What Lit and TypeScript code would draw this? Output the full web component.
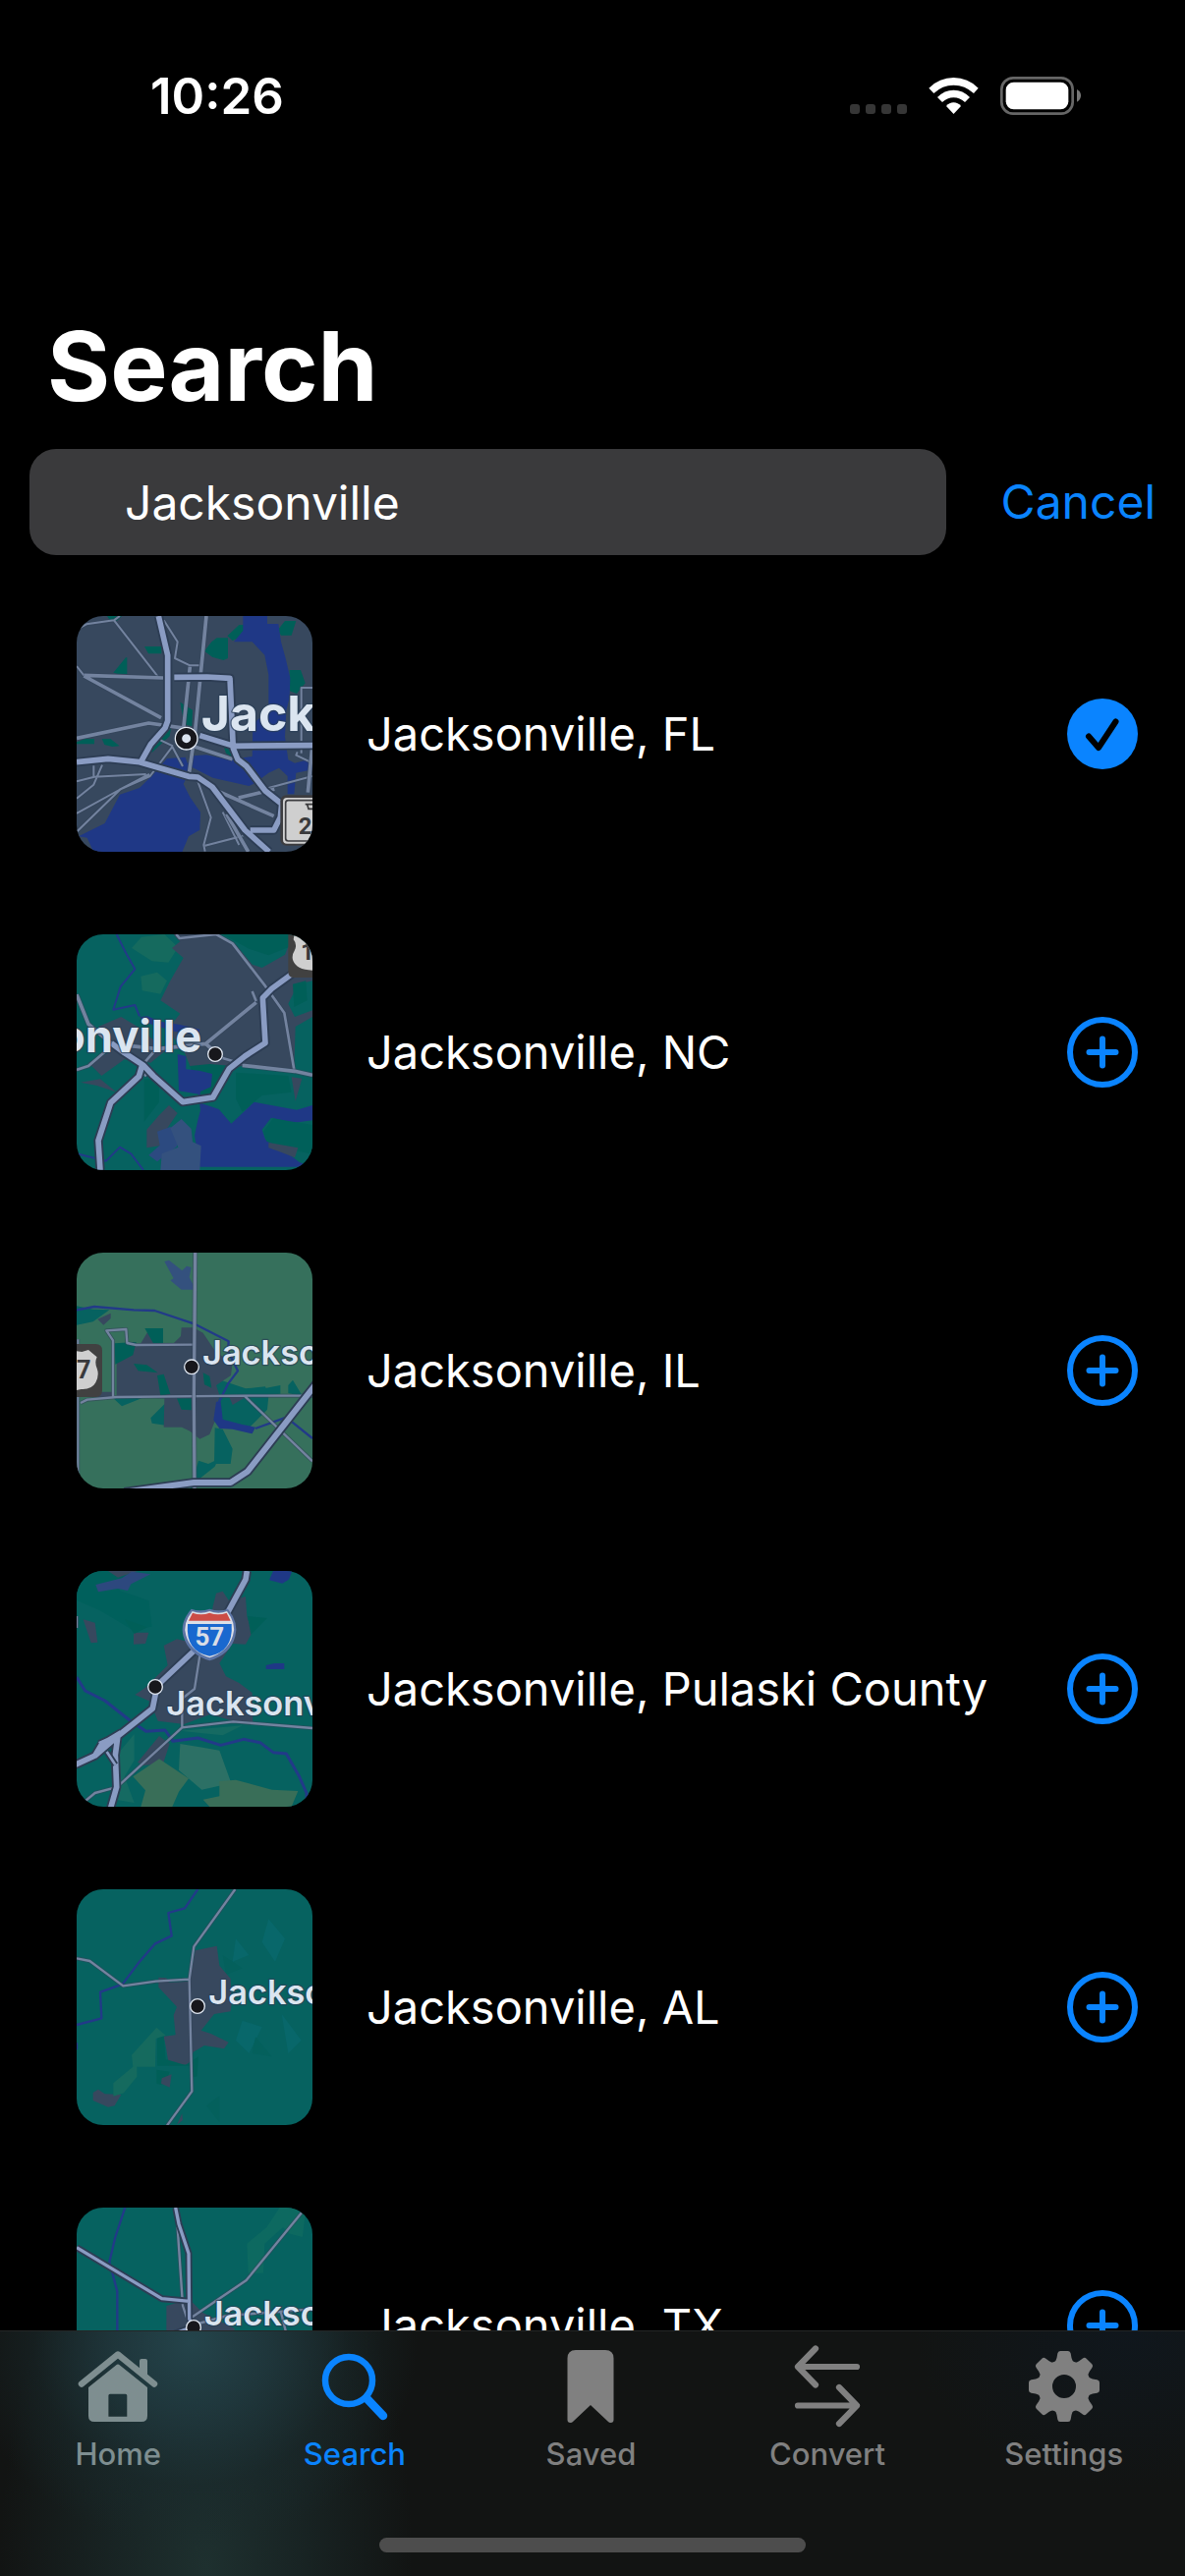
import { LitElement, html, svg, css, nothing, TemplateResult, SVGTemplateResult } from "lit";
import { customElement, property, state } from "lit/decorators.js";
import { classMap } from "lit/directives/class-map.js";

const BLUE = "#0a84ff";

/* ---------- map thumbnails (720-unit square canvases) ---------- */

const area = (fill: string, d: string) => svg`<path fill=${fill} d=${d} />`;

const river = (d: string, w = 6) =>
  svg`<path fill="none" stroke="#223a88" stroke-width=${w} stroke-linejoin="round" d=${d} />`;

const minor = (d: string, w = 8) =>
  svg`<path fill="none" stroke="#33445a" stroke-opacity=".6" stroke-width=${w + 5} stroke-linejoin="round" d=${d} />
      <path fill="none" stroke="#73839f" stroke-width=${w} stroke-linejoin="round" d=${d} />`;

const major = (d: string, w = 17) =>
  svg`<path fill="none" stroke="#2d3d54" stroke-width=${w + 11} stroke-linejoin="round" d=${d} />
      <path fill="none" stroke="#8a9cc3" stroke-width=${w} stroke-linejoin="round" d=${d} />`;

const place = (name: string, x: number, y: number, size: number, anchor = "start") =>
  svg`<text class=${size > 120 ? "place large" : "place"} x=${x} y=${y} font-size=${size} text-anchor=${anchor}>${name}</text>`;

const dot = (x: number, y: number) =>
  svg`<circle cx=${x} cy=${y} r="22" fill="#17171c" stroke="#dfe6f0" stroke-width="4" />`;

const CITY = "#37485e";
const TEAL = "#066260";
const PARK = "#005f58";
const WATER = "#1f3886";
const FIELD = "#36705c";
const LAKE = "#34517e";

interface MapArt {
  box: string;
  art: SVGTemplateResult;
}

const maps: Record<string, MapArt> = {
  fl: {
    box: "54 51 720 720",
    art: svg`
      ${area(CITY, "M54 51h720v720H54z")}
      ${area(PARK, "M147 51h45l-14 14h-22zM166 224l38-46h4v50l-30-1zM261 144h52v22h-40zM54 436l26-10h28v16H54zM131 426h26l28 22-22 2-24-6zM444 158l22-28 16-12h34v62l-14 6-34-10zM514 112l36-34h14v34l-34 14zM668 94l22-28h34l-14 44h-32zM704 216h34l14 40-26 32-22-8zM370 314l38 24-2 50-24-6zM282 462l60-68-4 24-54 50zM500 440l26 16 6 26-22-12z")}
      ${area(WATER, "M562 51H636V75H670L678 130 692 180 706 240 704 300 694 340 690 420 700 490 720 500 774 486V520L724 530 718 595H698V540L672 515 640 530 600 560 580 570 470 545 390 505 410 478 450 475 520 490 590 480 592 380 640 340V230L628 170 590 130H534L562 96Z")}
      ${area(WATER, "M330 486l56-4 14 42-20 40 20 40 32 46-2 54-34 20-20 48H106l-20-44-26-4 80-40 46-88 60-20 40-40z")}
      ${minor("M54 92l30-16 84-12 18-13M168 64l134 172M54 204l22 28M54 556l54-14 158-8M54 608l52-42 26-60M106 508v34M54 654l130-72 92-48M54 710l134-130 90-40 68-90 32 60M310 430l38 18M320 64l42 66-8 50 46 22h28M446 770l-4-20 22-84-40-110M446 752l116-30M640 576l134-36M728 466l-4 10 50 24M774 270h-34v200M500 650l50 100", 6)}
      ${minor("M450 51l-34 350-20 140M400 206l-20 190M76 232l242 8M76 234l236 128M54 424l220-46 112 16M414 450l116 38M490 588l166 74M548 606l110-26M774 440l-14 150M512 656l66 115", 11)}
      ${major("M304 51l28 120v200l-8 22-44 50-28 50M54 497l96-10 96 10 150 44 28 2 44 30 100 132 74 66M352 238l100-1 70 4 10 214 14 34 26 20 58 76 50 40-4 40-20 40h-72M430 416l104 32 240-2")}
      <rect x="676" y="598" width="152" height="154" rx="18" fill="#3d3d40" />
      <rect x="684" y="606" width="150" height="140" rx="12" fill="#cfcfcf" />
      <rect x="692" y="614" width="150" height="124" rx="8" fill="none" stroke="#3d3d40" stroke-width="5" />
      <path d="M752 626h40M758 626l4 14h14" fill="none" stroke="#3a3a3c" stroke-width="5" />
      <text class="shield" x="731" y="716" font-size="72">22</text>
      <circle cx="389" cy="425" r="24" fill="#dbe3ef" />
      <circle cx="389" cy="425" r="23" fill="none" stroke="#17171c" stroke-width="19" />
      <circle cx="389" cy="425" r="34" fill="none" stroke="#e6ebf3" stroke-width="4" />
      ${place("Jacksonville", 434, 403, 150)}
    `,
  },
  nc: {
    box: "54 48 720 720",
    art: svg`
      ${area(TEAL, "M54 48h720v720H54z")}
      ${area("#156a5e", "M222 90l30-34 70-8 42 40-30 46-50-4zM250 176l50-12 30 26-20 40-56-10z")}
      ${area(CITY, "M345 90L370 70 350 48H484L540 80 590 140 620 150 690 110 710 60 774 110V190L730 200 700 260 720 300 774 280V300L722 330 718 460 560 450 530 455 480 540 400 450 380 400 330 340 370 290 310 250 340 190 380 120ZM120 330L190 300 240 330 300 380 330 400 280 440 200 430 130 480 90 440 150 410 160 380ZM66 500l60-10 50 40-60-20zM548 506l20 40 2 34-20-30zM306 600l30-30 26 24-34 50-20 50-40 6v-56zM710 484l32 4-20 70z")}
      ${area(PARK, "M500 48h200v40l-60 24-60-20zM714 200l40-10 4 60-40 20zM540 470l160 10 10 50-90 10-60 50-20-40zM260 490h46v70l-46 60z")}
      ${area(PARK, "M400 450l60-6 70 6-40 70-60 30z")}
      ${area(WATER, "M246 300l24-2 40 16 60 10 60 14-4 16-60-6-100-30zM362 414l26 6v40l40 4 40 10-4 40-32 14-4 34 60 20 38 44 70-66 40 8 90 16 48-14v46l-60 8-66-16-28 36 10 30 44 24 60 46 42 14H430l-16-96 10-46 8-30-6-50-60-10z")}
      ${area("#00605a", "M624 650l30-40 60 10 60 10v90l-90-20-50-20z")}
      ${area(CITY, "M640 684l90 16-10 30-50-20-30-10z")}
      ${area("#2c4a80", "M300 650l40-14 32 20-12 40-60 46-26-20 34-30z")}
      ${area(LAKE, "M340 640l34-28 30 30 4 40 26 12-4 74H310l4-50 50-20z")}
      ${river("M176 48l30 60 26 46-44 54-22 70 66-14 14 34M54 718l90 22 42-42 34 20 38 50")}
      ${minor("M358 48l10 12 112-12 50 28 100 130 58 82 30 174M54 462l36-12 70-60M590 222l12 30M500 426l60 18 M264 436l30-34", 8)}
      ${minor("M54 232l36 90 70 60 140 16 148-16 154-126M448 382l50 44M560 448l160 18 54 12M260 480l20-20", 11)}
      ${major("M126 768l-6-90 38-116 86-80 10-34M160 380l40 30 58 38 30 32 90 80 92-14 50-88 48-38 62-40-8-138 28-28 74-54")}
      <path d="M700 48h80v132h-62q-18 0-18-18z" fill="#414141" />
      <path d="M718 52h62v106q-56 0-66-32-4-14 6-30 8-18-4-32z" fill="#cfcfcf" />
      <text class="shield" x="738" y="126" font-size="72">17</text>
      ${dot(477, 414)}
      ${place("Jacksonville", 436, 407, 136, "end")}
    `,
  },
  il: {
    box: "54 45 720 720",
    art: svg`
      ${area(FIELD, "M54 45h720v720H54z")}
      ${area(LAKE, "M322 72l14-4 40 32 14-14 14 4-6 30 12 24v14h-36l-34-28 10-6z")}
      ${area(TEAL, "M54 208l50 10 50 2-50 36-50 10zM162 486l90 4-60 24zM280 550l60-60 40 20-30 66-66-10zM476 580l24 4 30 60-6 46h-50zM400 770l26-90 30 10 30-14-10 22-50 40zM480 430l90 30 60-6 10 30-4 40-60 60-100-20zM626 460l50-10v26l-50 4zM700 450l14-16 30 50-44-10z")}
      ${area(CITY, "M118 248l40-18v16l-22 20zM176 340L250 322 275 280 300 290 318 322 350 322 372 300 374 274 410 274 440 290 460 320 480 350 530 380 525 420 480 450 490 480 480 550 460 600 430 614 400 590 375 578 320 578 322 490 176 486ZM110 470h52v16H110zM520 486h50l-40 24z")}
      ${area(PARK, "M262 276h56v46h-30zM228 384l40 4 34 24-60-6zM300 420l20-4 20 60-30 6zM440 412l20 10 6 36-22-10zM170 322l66-4-10 40-54 28zM360 490h44v36l-30-2z")}
      ${river("M54 220l54-10 120 10 64 2 120 40 106 54-2 30 30 60-30 40-30 60M600 582l94-34 80 64", 7)}
      ${area(WATER, "M480 500h14l6 54 60 16 40 8-10 20-60-14-40-2-18-26z")}
      ${minor("M412 326l-176 1-28-6-3-42-60 4 20 30v172M66 504l20-10 90-8 392-4h206M568 484l206 198", 7)}
      ${minor("M416 45l-4 440 2 280", 10)}
      ${minor("M58 310v455", 6)}
      ${major("M200 776l212-29h112l52-34 210-268", 18)}
      <path d="M40 324h72q20 0 20 20v122q0 20-20 20H40z" fill="#414141" />
      <path d="M40 344l30 4 20-6 26 22q-8 16 0 34 8 22-4 44-12 22-44 20l-28 6z" fill="#cfcfcf" />
      <text class="shield" x="98" y="430" font-size="76" text-anchor="end">67</text>
      ${dot(405, 394)}
      ${place("Jacksonville", 438, 387, 103)}
    `,
  },
  pulaski: {
    box: "54 42 720 720",
    art: svg`
      ${area(TEAL, "M54 42h720v720H54z")}
      ${area("#00605c", "M54 42h160l-30 60 90 30 10 80-60 10-100-60-70-30z")}
      ${area("#156a62", "M370 530l190-16-60 30-60-6zM180 600l50-60v80l-30 50 30 80-60-10z")}
      ${area(CITY, "M480 110l20-6 20 30 50-14 4 60 16 50-20 36-40-2-40 60 20 40 40 20 40 30 2 90-60-4-70-20-80 30-80-10-24-60-46-20 30-20 70-70-12-60 40-20 90 20 20-120zM74 190l36 10 8 60-20 2zM228 230h46l-10 34-36 2zM150 42h90l-60 20zM240 626l66-80 32 24-20 60-60 6z")}
      ${area("#2d487e", "M112 84l80-20 30-20 58 8-60 30-10 20-30-6-60 10z")}
      ${area(PARK, "M576 180l60 6-50 50zM200 190l70 24-40 20z")}
      ${area(WATER, "M654 42h58l-10 26-20 12-40-10zM632 330l26-6h30v18h-56z")}
      ${area("#2c7065", "M370 570l60 10 60 10 36 100-90 20-70-60z")}
      ${area("#396e58", "M226 670l80-54 90 60-30 40-20 46H250l14-50zM440 740l50-10v-46l50-4 110 30 80 4-20 48H460z")}
      ${river("M54 366l26 42 60 30 76 60 50 34 58-4 24 34 76-10 70 22 70-18 50 10 40 30 40 4 40 70 22 50v50", 9)}
      ${minor("M430 300l-16 102-38 30v88M376 520l156-18 242 20M376 520l-190 174M76 748l34-28 60-16M54 180v36", 7)}
      ${major("M574 42l-4 26-60 110-100 110-110 104-14 70-106 84-70 60-60 28M180 544l-8 60 4 98-20 70M124 572l56-26M110 606l20-34 60-36", 17)}
      ${major("M146 594l26 40", 8)}
      <path d="M404 158q26 10 56 0 30 10 56 0 34 42 22 84-14 54-78 74-64-20-80-74-12-42 24-84z" fill="#5c74a4" />
      <path d="M407 165q26 10 53 0 27 10 53 0 30 38 18 74-14 48-71 68-58-20-72-68-12-36 19-74z" fill="#dcdee6" />
      <path d="M393 204h134q6 84-67 98-74-14-67-98z" fill="#1968cf" />
      <path d="M408 170q26 10 52 0 26 10 52 0l12 24H396z" fill="#cc4c46" />
      <text class="route" x="460" y="270" font-size="78" text-anchor="middle">57</text>
      ${dot(294, 396)}
      ${place("Jacksonville", 328, 482, 103)}
    `,
  },
  al: {
    box: "54 39 720 720",
    art: svg`
      ${area(TEAL, "M54 39h720v720H54z")}
      ${area("#08676a", "M640 130l50 60-30 70-40-60zM540 190l40 50-50 20zM560 440l60 20-40 80-40-40zM680 420l60 80-40 40z")}
      ${area("#04605c", "M500 240l60 40-50 20zM600 490l50 60-60-10zM450 700l40-30v80z")}
      ${area(CITY, "M416 226l66-14 8 60 34 40 4 70-4 30-50 8-40 50 30 10 54 26-14 20-60-10-34 20-14 38-60 4-10-60-6-30 36-4-6-60 10-26-56-60v-30l24 2 8 14 62-4 8-40zM104 660l16-10 20 14 50 2-20 34-20 4-46-20zM360 758l16-34 2 20z")}
      ${area(PARK, "M300 488h20l6 70 60 18 40-26-4 60-20 4-4-36-98 0zM298 590l40 6-6 20-20 20-14-4z")}
      ${area(CITY, "M314 616l30-12-6 40-26-12z")}
      ${area("#156a5e", "M222 545l76-84 28 24-30 10-2 86h-56v30l-40 50-32 10v-40l60-50z")}
      ${river("M424 39l-40 58-50 14 10 70-50 24-52 60-48 64-68 24 4 80-76 20M54 508v20", 7)}
      ${minor("M54 250l40 8 102 76 100-14 102-6M538 39L412 214l-14 100 8 342-76 104", 7)}
      ${dot(423, 396)}
      ${place("Jacksonville", 457, 391, 103)}
    `,
  },
  tx: {
    box: "0 0 720 720",
    art: svg`
      ${area(TEAL, "M0 0h720v720H0z")}
      ${area("#0d6960", "M520 110l60-50 40-60h80l-10 90-40-10-20-20-56 50-4 90h-46z")}
      ${area(CITY, "M274 300l70-20 40 40 100 50-30 40-180 20z")}
      ${river("M148 0l-30 90-18 76 24 90v180", 7)}
      ${minor("M688 14L518 222 350 336M308 60l16 240 20 60M350 360l110-30 260-20M624 320l20 80", 7)}
      ${major("M302 0l10 50 30 90 2 200 14 30M0 122l260 156 84 8", 10)}
      ${major("M290 390l70-26", 14)}
      ${dot(357, 366)}
      ${place("Jacksonville", 389, 361, 103)}
    `,
  },
};

@customElement("map-thumb")
class MapThumb extends LitElement {
  @property() map = "fl";

  static styles = css`
    :host {
      display: block;
      flex: none;
      width: 240px;
      height: 240px;
      border-radius: 27px;
      overflow: hidden;
    }
    .canvas {
      display: block;
      width: 100%;
      height: 100%;
    }
    .place {
      font-family: Inter, "Liberation Sans", sans-serif;
      font-weight: 600;
      fill: #dbe5f0;
      stroke: #2b4058;
      stroke-opacity: 0.7;
      stroke-width: 8px;
      stroke-linejoin: round;
      paint-order: stroke;
    }
    .large {
      font-weight: 700;
    }
    .shield,
    .route {
      font-family: "Roboto", "Liberation Sans", sans-serif;
      font-weight: 700;
      fill: #3a3a3c;
    }
    .route {
      fill: #d9dde6;
    }
  `;

  render() {
    const m = maps[this.map];
    return html`<svg class="canvas" viewBox=${m.box} aria-hidden="true">${m.art}</svg>`;
  }
}

/* ---------- icons ---------- */

const plusIcon = html`<svg viewBox="0 0 72 72" width="72" height="72" aria-hidden="true">
  <circle cx="36" cy="36" r="33" fill="none" stroke=${BLUE} stroke-width="6" />
  <path d="M36 22.500V49.500M22.500 36H49.500" stroke=${BLUE} stroke-width="6" stroke-linecap="round" />
</svg>`;

const checkIcon = html`<svg viewBox="0 0 72 72" width="72" height="72" aria-hidden="true">
  <circle cx="36" cy="36" r="36" fill=${BLUE} />
  <path d="M22 38.500L32 50L49.500 23.500" fill="none" stroke="#000" stroke-width="6" stroke-linecap="round" stroke-linejoin="round" />
</svg>`;

const tabIcons: Record<string, SVGTemplateResult> = {
  home: svg`
    <path d="M5 37.500L42 7.500L79 37.500" fill="none" stroke="currentColor" stroke-width="6.500" stroke-linecap="round" stroke-linejoin="round" />
    <path d="M64 27V14q0-2 2-2h4q2 0 2 2v19z" fill="currentColor" />
    <path fill="currentColor" fill-rule="evenodd" d="M40 18.500q2-2 4 0L72 41V70q0 6-6 6H18q-6 0-6-6V41zM34 47.700q-1.600 0-1.600 1.600V70.700H51.300V49.300q0-1.600-1.600-1.600z" />`,
  search: svg`
    <circle cx="36" cy="34" r="24" fill="none" stroke="currentColor" stroke-width="6.500" />
    <path d="M54 52L71 70" stroke="currentColor" stroke-width="8.500" stroke-linecap="round" />`,
  saved: svg`
    <path fill="currentColor" d="M27 3h30q8.500 0 8.500 8.500V74q0 3-3 3-1.500 0-3-1.500L42 59 24.500 75.500q-1.500 1.500-3 1.500-3 0-3-3V11.500Q18.500 3 27 3z" />`,
  convert: svg`
    <path d="M72 20H12L30 1.500M12 20L30 38.500M12 59.500H72L54 41M72 59.500L54 78" fill="none" stroke="currentColor" stroke-width="6.200" stroke-linecap="round" stroke-linejoin="round" />`,
  settings: svg`
    <circle cx="42" cy="40" r="19.500" fill="none" stroke="currentColor" stroke-width="15" />
    ${[0, 45, 90, 135, 180, 225, 270, 315].map(
      (a) => svg`<path transform="rotate(${a} 42 40)" fill="currentColor" d="M30.500 17Q34 14.500 34.500 11L35.300 6.500Q35.700 4 38 4h8Q48.300 4 48.700 6.500L49.500 11Q50 14.500 53.500 17z" />`
    )}`,
};

interface Place {
  name: string;
  map: string;
  saved: boolean;
}

const tabs = [
  { id: "home", label: "Home" },
  { id: "search", label: "Search" },
  { id: "saved", label: "Saved" },
  { id: "convert", label: "Convert" },
  { id: "settings", label: "Settings" },
];

@customElement("app-root")
class AppRoot extends LitElement {
  @state() private places: Place[] = [
    { name: "Jacksonville, FL", map: "fl", saved: true },
    { name: "Jacksonville, NC", map: "nc", saved: false },
    { name: "Jacksonville, IL", map: "il", saved: false },
    { name: "Jacksonville, Pulaski County", map: "pulaski", saved: false },
    { name: "Jacksonville, AL", map: "al", saved: false },
    { name: "Jacksonville, TX", map: "tx", saved: false },
  ];
  @state() private tab = "search";

  static styles = css`
    :host {
      display: flex;
      flex-direction: column;
      height: 100vh;
      background: #000;
      color: #fff;
      font-family: Inter, "Liberation Sans", sans-serif;
      font-size: 48px;
      line-height: 60px;
    }
    * {
      box-sizing: border-box;
    }
    svg {
      display: block;
      overflow: visible;
    }
    button,
    input {
      font: inherit;
      border: 0;
      padding: 0;
      margin: 0;
      background: none;
      color: inherit;
    }
    .status {
      flex: none;
      display: flex;
      align-items: center;
      justify-content: space-between;
      height: 196px;
      padding: 0 106px 0 153px;
      font-size: 51px;
      font-weight: 600;
    }
    .signals {
      display: flex;
      gap: 22px;
    }
    .title {
      flex: none;
      margin: 0;
      padding: 117px 48px 24px;
      font-size: 98px;
      line-height: 120px;
      font-weight: 700;
    }
    .search {
      flex: none;
      display: flex;
      align-items: center;
      gap: 56px;
      padding: 0 30px;
    }
    .field {
      flex: 1;
      min-width: 0;
      height: 108px;
      padding: 0 97px;
      border-radius: 27px;
      background: #3a3a3c;
      outline: none;
    }
    .cancel {
      color: #0a84ff;
    }
    .results {
      flex: 1;
      min-height: 0;
      overflow: hidden;
      display: flex;
      flex-direction: column;
      gap: 84px;
      margin: 0;
      padding: 62px 48px 0 78px;
      list-style: none;
    }
    .row {
      flex: none;
      display: flex;
      align-items: center;
      gap: 55px;
    }
    .name {
      flex: 1;
      min-width: 0;
      font-size: 47px;
    }
    .tabbar {
      flex: none;
      display: flex;
      flex-direction: column;
      align-items: center;
      justify-content: space-between;
      height: 250px;
      padding: 16px 0 24px;
      border-top: 1px solid #242626;
      background:
        radial-gradient(ellipse 230px 210px at 195px 10px, #24444b 0%, #20393fdd 35%, #1a2b2e77 70%, #16202200 100%),
        radial-gradient(ellipse 210px 420px at 210px 240px, #1e302f 0%, #1a2828cc 45%, #141a1a00 100%),
        radial-gradient(ellipse 220px 160px at 1150px 0, #10171d 0%, #12141400 100%),
        #121413;
    }
    .tabs {
      align-self: stretch;
      display: grid;
      grid-template-columns: repeat(5, 1fr);
      padding-right: 3px;
    }
    .tab {
      display: flex;
      flex-direction: column;
      align-items: center;
      gap: 11px;
      color: #808080;
      font-size: 31px;
      line-height: 36px;
      font-weight: 500;
    }
    .tab.first {
      color: #7e8e90;
    }
    .tab.active {
      color: #0a84ff;
    }
    .indicator {
      width: 36%;
      height: 15px;
      border-radius: 8px;
      background: #4d4d4d;
    }
  `;

  private toggle(index: number) {
    this.places = this.places.map((p, i) => (i === index ? { ...p, saved: !p.saved } : p));
  }

  private renderStatus(): TemplateResult {
    return html`<div class="status">
      <span>10:26</span>
      <div class="signals">
        <svg viewBox="75 54 174 120" width="58" height="40" aria-hidden="true">
          ${[75, 123, 171, 219].map((x) => svg`<rect x=${x} y="138" width="30" height="30" rx="9" fill="#363636" />`)}
        </svg>
        <svg viewBox="315 54 153 120" width="51" height="40" fill="#fff" aria-hidden="true">
          <path d="M316 89Q348 57 391.500 57T467 89L453 105Q426 80 391.500 80T331 105z" />
          <path d="M342 117Q363 95 391.500 95T441 117L426 132Q411 118 391.500 118T357 132z" />
          <path d="M369 144Q378 133 391.500 133T414 144L391.500 168z" />
        </svg>
        <svg viewBox="534 54 246 120" width="82" height="40" aria-hidden="true">
          <rect x="538" y="58" width="217" height="109" rx="35" fill="none" stroke="#666" stroke-width="8" />
          <rect x="551" y="71" width="191" height="83" rx="24" fill="#fff" />
          <path d="M768 93q12 6 12 19t-12 19z" fill="#777" />
        </svg>
      </div>
    </div>`;
  }

  render() {
    return html`
      ${this.renderStatus()}
      <h1 class="title">Search</h1>
      <div class="search">
        <input class="field" type="text" aria-label="Search" .value=${"Jacksonville"} />
        <button class="cancel">Cancel</button>
      </div>
      <ul class="results">
        ${this.places.map(
          (p, i) => html`<li class="row">
            <map-thumb .map=${p.map}></map-thumb>
            <span class="name">${p.name}</span>
            <button
              aria-label="${p.saved ? "Remove" : "Add"} ${p.name}"
              aria-pressed=${p.saved}
              @click=${() => this.toggle(i)}
            >
              ${p.saved ? checkIcon : plusIcon}
            </button>
          </li>`
        )}
      </ul>
      <nav class="tabbar">
        <div class="tabs">
          ${tabs.map(
            (t, i) => html`<button
              class=${classMap({ tab: true, first: i === 0, active: t.id === this.tab })}
              aria-current=${t.id === this.tab ? "page" : nothing}
              @click=${() => (this.tab = t.id)}
            >
              <svg viewBox="0 0 84 80" width="84" height="80" aria-hidden="true">${tabIcons[t.id]}</svg>
              ${t.label}
            </button>`
          )}
        </div>
        <div class="indicator"></div>
      </nav>
    `;
  }
}
